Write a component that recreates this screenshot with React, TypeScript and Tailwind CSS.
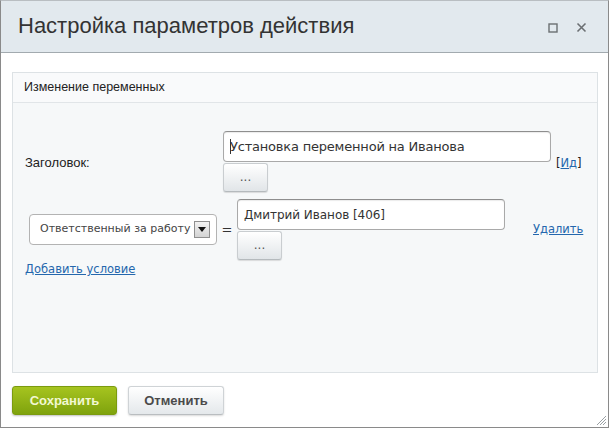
import React from 'react';

const sans = { fontFamily: '"Liberation Sans", Arial, sans-serif' };
const dv = { fontFamily: '"DejaVu Sans", Verdana, sans-serif' };

const DotsButton: React.FC = () => (
  <button className="w-[45px] h-[29px] rounded-[3px] border border-[#c9cdd0] border-b-[#b5babd] bg-gradient-to-b from-[#ffffff] to-[#e1e5e8] shadow-[0_1px_1px_rgba(0,0,0,0.12)] text-[12px] text-[#555] leading-none flex items-center justify-center pb-[2px]" style={dv}>
    ...
  </button>
);

const TextInput: React.FC<{ value: string; width: string; text: string; caret?: boolean }> = ({ value, width, text, caret }) => (
  <div className={`${width} ${text} h-[31px] rounded-[4px] border border-[#a9a9a9] border-t-[#8e8e8e] bg-white flex items-center pl-[6px] text-[#333] shadow-[inset_0_1px_1px_rgba(0,0,0,0.08)]`} style={dv}>
    {caret && <span className="w-px h-[15px] bg-[#333] -mr-[1px]" />}
    {value}
  </div>
);

export default function App() {
  return (
    <div className="w-[610px] h-[428px] bg-white" style={sans}>
      <div className="w-[609px] h-[428px] border border-[#8a8a8a] border-t-[#b9bec2] flex flex-col relative">
        {/* title bar */}
        <div className="h-[52px] shrink-0 bg-[#e2e9ee] border-b border-[#a2aaaf] flex items-center justify-between pl-[17px] pr-[21px]">
          <h1 className="text-[22px] text-[#333] leading-none pb-[1px]">Настройка параметров действия</h1>
          <div className="flex items-center gap-[18px] pt-[2px]">
            <svg width="10" height="10" viewBox="0 0 10 10">
              <rect x="1" y="1" width="8" height="8" fill="none" stroke="#6b6f72" strokeWidth="1.4" />
            </svg>
            <svg width="11" height="11" viewBox="0 0 11 11">
              <path d="M1.5 1.5 L9.5 9.5 M9.5 1.5 L1.5 9.5" stroke="#6b6f72" strokeWidth="1.6" />
            </svg>
          </div>
        </div>

        {/* content */}
        <div className="flex-1 flex flex-col pl-[11px] pr-[10px] pt-[19px] pb-[12px]">
          <div className="flex-1 border border-[#dde2e5] bg-[#f6f8f9] flex flex-col">
            <div className="h-[30px] border-b border-[#e1e5e8] bg-[#f9fafb] px-[11px] flex items-center text-[12.5px] text-[#222]">
              Изменение переменных
            </div>
            <div className="pt-[28px] px-[12px] flex flex-col">
              {/* row 1 */}
              <div className="flex">
                <div className="w-[198px] flex items-center text-[13px] text-[#222] pt-[3px]">Заголовок:</div>
                <div className="flex flex-col gap-[1px]">
                  <TextInput value="Установка переменной на Иванова" width="w-[328px]" text="text-[13px] tracking-[-0.2px]" caret />
                  <DotsButton />
                </div>
                <div className="ml-[5px] self-center mt-[4px] text-[11.5px] text-[#222]" style={dv}>
                  [<a className="text-[#2467ad] underline">Ид</a>]
                </div>
              </div>

              {/* row 2 */}
              <div className="flex items-center mt-[7px] ml-[4px]">
                <div className="w-[188px] h-[31px] rounded-[4px] border border-[#b3b3b3] bg-white flex items-center justify-between pl-[10px] pr-[6px] text-[11px] text-[#444]" style={dv}>
                  <span>Ответственный за работу</span>
                  <span className="w-[16px] h-[17px] border border-[#8f8f8f] bg-gradient-to-b from-[#f2f2f2] to-[#d3d3d3] flex items-center justify-center">
                    <svg width="8" height="5" viewBox="0 0 8 5">
                      <path d="M0 0 L8 0 L4 5 Z" fill="#111" />
                    </svg>
                  </span>
                </div>
                <span className="w-[20px] text-center text-[13px] text-[#333]" style={dv}>=</span>
                <div className="flex flex-col gap-[1px]">
                  <TextInput value="Дмитрий Иванов [406]" width="w-[268px]" text="text-[12px] tracking-[-0.05px]" />
                  <DotsButton />
                </div>
                <a className="ml-[28px] text-[11.5px] text-[#2467ad] underline" style={dv}>Удалить</a>
              </div>

              <a className="mt-[1px] text-[11.5px] text-[#2467ad] underline self-start" style={dv}>Добавить условие</a>
            </div>
          </div>

          {/* footer */}
          <div className="mt-[13px] flex gap-[11px]">
            <button className="w-[105px] h-[29px] rounded-[3px] border border-[#7b9b0f] bg-gradient-to-b from-[#a6c41f] to-[#7fa30d] shadow-[0_1px_2px_rgba(0,0,0,0.25)] text-[13px] font-bold text-[#f2f8d2]">
              Сохранить
            </button>
            <button className="w-[96px] h-[29px] rounded-[3px] border border-[#cfd3d6] border-b-[#b9bdc0] bg-gradient-to-b from-[#ffffff] to-[#e4e8eb] shadow-[0_1px_2px_rgba(0,0,0,0.15)] text-[13px] font-bold text-[#4b4b4b]">
              Отменить
            </button>
          </div>
        </div>

        {/* resize grip */}
        <svg className="absolute right-[1px] bottom-[1px]" width="12" height="12" viewBox="0 0 12 12">
          <path d="M11 2 L2 11 M11 5 L5 11 M11 8 L8 11" stroke="#9aa0a4" strokeWidth="1" />
        </svg>
      </div>
    </div>
  );
}
